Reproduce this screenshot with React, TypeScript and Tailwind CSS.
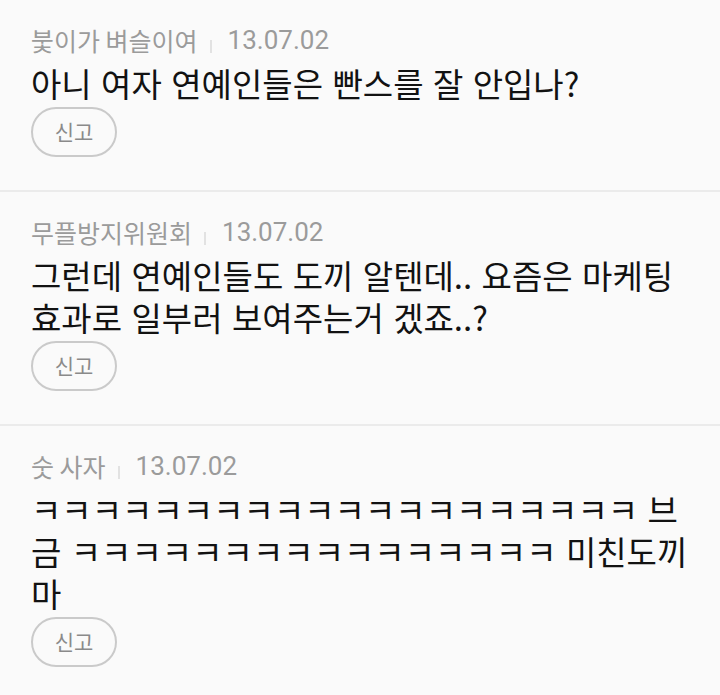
import React from "react";

const KR = { fontFamily: '"Noto Sans CJK KR", "Noto Sans", sans-serif' };

type C = { name: string; date: string; lines: string[] };

const comments: C[] = [
  { name: "붗이가 벼슬이여", date: "13.07.02", lines: ["아니 여자 연예인들은 빤스를 잘 안입나?"] },
  {
    name: "무플방지위원회",
    date: "13.07.02",
    lines: ["그런데 연예인들도 도끼 알텐데.. 요즘은 마케팅", "효과로 일부러 보여주는거 겠죠..?"],
  },
  {
    name: "숫 사자",
    date: "13.07.02",
    lines: [
      "ㅋㅋㅋㅋㅋㅋㅋㅋㅋㅋㅋㅋㅋㅋㅋㅋㅋㅋㅋㅋ 브",
      "금 ㅋㅋㅋㅋㅋㅋㅋㅋㅋㅋㅋㅋㅋㅋㅋㅋ 미친도끼",
      "마",
    ],
  },
];

function Comment({ c }: { c: C }) {
  return (
    <div className="pl-[31px] pr-2 pt-[25px] pb-[33px]">
      <div className="flex items-center h-[30px] whitespace-nowrap">
        <span className="text-[25px] leading-[30px] text-[#9b9b9b]" style={KR}>
          {c.name}
        </span>
        <span className="ml-[12px] mt-[12px] w-[2px] h-[13px] bg-[#e2e2e2]" />
        <span
          className="ml-[16px] text-[26px] leading-[30px] text-[#9b9b9b]"
          style={{ fontFamily: 'Roboto, "Noto Sans", sans-serif' }}
        >
          {c.date}
        </span>
      </div>
      <div
        className="mt-[7px] text-[33px] leading-[42px] text-[#121212] whitespace-nowrap [word-spacing:2px]"
        style={KR}
      >
        {c.lines.map((l, i) => (
          <div key={i}>{l}</div>
        ))}
      </div>
      <button
        className="mt-[3px] w-[86px] h-[50px] rounded-full border-2 border-[#cacaca] bg-transparent flex items-center justify-center text-[21px] text-[#8a8a8a]"
        style={KR}
      >
        신고
      </button>
    </div>
  );
}

export default function App() {
  return (
    <div className="w-[720px] h-[695px] overflow-hidden bg-[#fafafa]">
      {comments.map((c, i) => (
        <div key={i} className={i > 0 ? "border-t-2 border-[#ebebeb]" : ""}>
          <Comment c={c} />
        </div>
      ))}
    </div>
  );
}
